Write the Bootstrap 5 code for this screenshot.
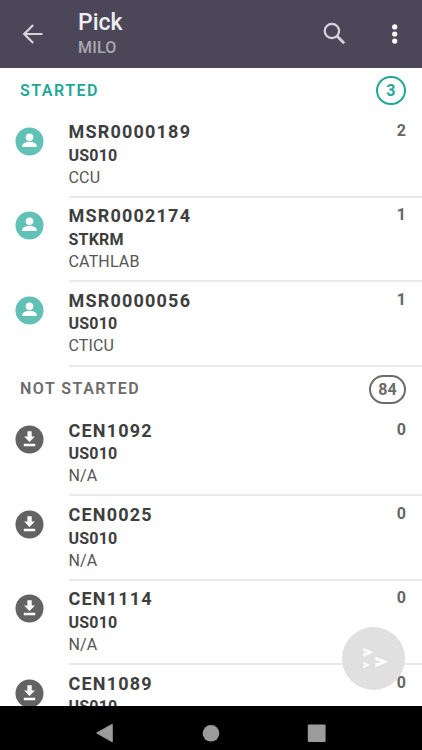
<!DOCTYPE html>
<html lang="en">
<head>
<meta charset="utf-8">
<meta name="viewport" content="width=device-width, initial-scale=1">
<title>Pick</title>
<link href="https://cdn.jsdelivr.net/npm/bootstrap@5.3.0/dist/css/bootstrap.min.css" rel="stylesheet">
<style>
body{font-family:Roboto,"Liberation Sans",sans-serif;color:#3e3e3e;height:750px}
svg{display:block;flex:none}
.topbar{height:68px;background:#4b4759;padding:0 21px 0 20px}
.topbar-text{margin-left:32px;padding-top:8px}
.topbar-title{font-size:23px;line-height:26px;font-weight:500;color:#eeedf2;padding-top:2px}
.topbar-sub{font-size:16px;line-height:20px;font-weight:500;color:#aaa7b3;margin-top:2px;letter-spacing:.2px}
.topbar-menu{margin-left:43px}
.pick-list{min-height:0}
.group-head{height:45.4px;padding:0 16px 0 20px;font-size:16px;font-weight:600;letter-spacing:1.5px;color:#6b6b6b}
.group-head.active{color:#1fa899}
.count-pill{height:29px;min-width:30px;padding:0 7px;border:2px solid currentColor;font-size:16px;line-height:25px;letter-spacing:.2px;font-weight:700;text-align:center}
.pick-row{height:84.4px;padding-left:15px}
.pick-icon{padding-top:13.4px;width:53.5px}
.pick-body{border-bottom:2px solid #e9e9e9;padding:6.6px 16px 0 0}
.pick-id{font-size:18px;line-height:24px;font-weight:700;letter-spacing:1.2px;margin-bottom:.7px}
.pick-loc{font-size:16px;line-height:22px;font-weight:700;letter-spacing:.2px}
.pick-dept{font-size:16px;line-height:22px;color:#555;letter-spacing:.15px}
.pick-qty{font-size:16px;line-height:22px;font-weight:700;color:#666}
.pick-qty.on-top{z-index:1}
.send-btn{width:63px;height:63px;right:17.5px;bottom:16px;background:#e0e0e0}
.sysbar{height:44.5px}
</style>
</head>
<body class="bg-white m-0 overflow-hidden d-flex flex-column">
<header class="topbar d-flex align-items-center flex-shrink-0">
  <svg width="26" height="24" viewBox="0 0 26 24" fill="none" stroke="#d5d3dc" stroke-width="2.2"><path d="M22.5 12H4M13.2 3L4.2 12l9 9"/></svg>
  <div class="topbar-text flex-grow-1 align-self-start">
    <div class="topbar-title">Pick</div>
    <div class="topbar-sub">MILO</div>
  </div>
  <svg width="24" height="24" viewBox="0 0 24 24" fill="none" stroke="#d5d3dc" stroke-width="2.2"><circle cx="9.9" cy="9" r="7.2"/><path d="M15.2 14.3l7 7" stroke-width="2.8"/></svg>
  <svg width="12" height="24" viewBox="0 0 12 24" fill="#fff" class="topbar-menu"><circle cx="5.7" cy="4.9" r="2.6"/><circle cx="5.7" cy="12" r="2.6"/><circle cx="5.7" cy="19.1" r="2.6"/></svg>
</header>

<svg width="0" height="0" class="position-absolute">
  <symbol id="person" viewBox="0 0 29 29"><circle cx="14.5" cy="14.5" r="14" fill="#62c1b7"/><circle cx="14.5" cy="10.2" r="3.8" fill="#fff"/><path d="M7.3 20v-1.4c0-2.6 4.8-3.9 7.2-3.9s7.2 1.3 7.2 3.9V20z" fill="#fff"/></symbol>
  <symbol id="download" viewBox="0 0 29 29"><circle cx="14.5" cy="14.5" r="14" fill="#636363"/><path d="M12.4 6.2h4.3v5.3h3.2l-5.4 5.4-5.4-5.4h3.3zM8.8 18.8h11.4v2.4H8.8z" fill="#fff"/></symbol>
</svg>

<main class="pick-list flex-grow-1 overflow-hidden position-relative">
  <div class="group-head active d-flex align-items-center justify-content-between"><span>STARTED</span><span class="count-pill rounded-pill">3</span></div>
  <div class="pick-row d-flex"><div class="pick-icon flex-shrink-0"><svg width="29" height="29"><use href="#person"/></svg></div><div class="pick-body flex-grow-1 d-flex justify-content-between"><div><div class="pick-id">MSR0000189</div><div class="pick-loc">US010</div><div class="pick-dept">CCU</div></div><div class="pick-qty">2</div></div></div>
  <div class="pick-row d-flex"><div class="pick-icon flex-shrink-0"><svg width="29" height="29"><use href="#person"/></svg></div><div class="pick-body flex-grow-1 d-flex justify-content-between"><div><div class="pick-id">MSR0002174</div><div class="pick-loc">STKRM</div><div class="pick-dept">CATHLAB</div></div><div class="pick-qty">1</div></div></div>
  <div class="pick-row d-flex"><div class="pick-icon flex-shrink-0"><svg width="29" height="29"><use href="#person"/></svg></div><div class="pick-body flex-grow-1 d-flex justify-content-between"><div><div class="pick-id">MSR0000056</div><div class="pick-loc">US010</div><div class="pick-dept">CTICU</div></div><div class="pick-qty">1</div></div></div>
  <div class="group-head d-flex align-items-center justify-content-between"><span>NOT STARTED</span><span class="count-pill rounded-pill">84</span></div>
  <div class="pick-row d-flex"><div class="pick-icon flex-shrink-0"><svg width="29" height="29"><use href="#download"/></svg></div><div class="pick-body flex-grow-1 d-flex justify-content-between"><div><div class="pick-id">CEN1092</div><div class="pick-loc">US010</div><div class="pick-dept">N/A</div></div><div class="pick-qty">0</div></div></div>
  <div class="pick-row d-flex"><div class="pick-icon flex-shrink-0"><svg width="29" height="29"><use href="#download"/></svg></div><div class="pick-body flex-grow-1 d-flex justify-content-between"><div><div class="pick-id">CEN0025</div><div class="pick-loc">US010</div><div class="pick-dept">N/A</div></div><div class="pick-qty">0</div></div></div>
  <div class="pick-row d-flex"><div class="pick-icon flex-shrink-0"><svg width="29" height="29"><use href="#download"/></svg></div><div class="pick-body flex-grow-1 d-flex justify-content-between"><div><div class="pick-id">CEN1114</div><div class="pick-loc">US010</div><div class="pick-dept">N/A</div></div><div class="pick-qty">0</div></div></div>
  <div class="pick-row d-flex"><div class="pick-icon flex-shrink-0"><svg width="29" height="29"><use href="#download"/></svg></div><div class="pick-body flex-grow-1 d-flex justify-content-between"><div><div class="pick-id">CEN1089</div><div class="pick-loc">US010</div></div><div class="pick-qty on-top position-relative">0</div></div></div>
  <button type="button" aria-label="Send" class="send-btn position-absolute border-0 rounded-circle p-0">
    <svg width="63" height="63" viewBox="0 0 63 63" fill="#fff"><path d="M21.3 21l10.2 4.3-10.2 4.4v-3.2l5.3-1.2-5.3-1.1zM33.3 29.5l13 5.2-13 5.3v-3.8l6.8-1.5-6.8-1.4zM21.3 35l6.7 2.9-6.7 3v-2.2l3.6-.8-3.6-.7z"/></svg>
  </button>
</main>

<footer class="sysbar bg-black flex-shrink-0">
  <svg width="422" height="44.5" viewBox="0 0 422 44.5" fill="#9b9b9b"><path d="M112.8 18.5v17.2q-.2.8-1 .4L96.6 27.6q-.7-.5 0-1l15.2-8.6q.8-.3 1 .5z"/><circle cx="211" cy="27.3" r="8.3"/><rect x="307.8" y="18.5" width="17.8" height="17.5" rx="1"/></svg>
</footer>
<script src="https://cdn.jsdelivr.net/npm/bootstrap@5.3.0/dist/js/bootstrap.bundle.min.js"></script>
</body>
</html>
